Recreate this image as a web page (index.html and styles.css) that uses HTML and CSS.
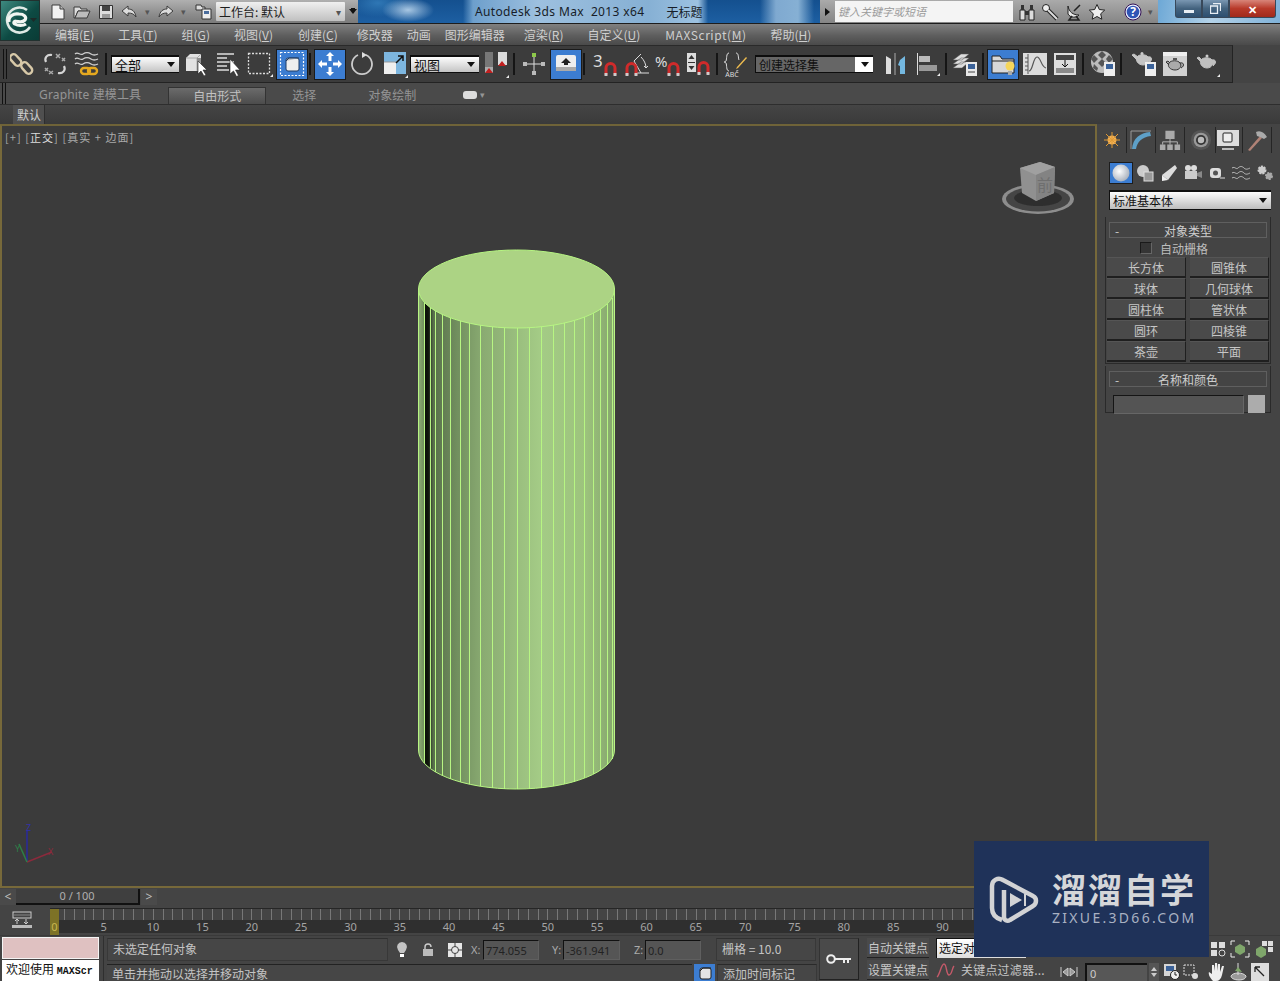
FILE: index.html
```html
<!DOCTYPE html>
<html lang="zh">
<head>
<meta charset="utf-8">
<title>Autodesk 3ds Max 2013 x64</title>
<link rel="stylesheet" href="styles.css">
</head>
<body>
<div class="app">

  <div class="logo">
    <svg width="38" height="39" viewBox="0 0 38 39"><path d="M26 9A12.500 12.500 0 1 0 29 26" fill="none" stroke="#dfe9e5" stroke-width="2.600"/><path d="M8 21c-1-6 5-9 10-8 5 0 8 3 6 6-2 2-6 2-9 1-2 0-3 2-1 3 3 2 8 2 11 0" fill="none" stroke="#f2f6f2" stroke-width="3.200"/><circle cx="16" cy="17" r="1.700" fill="#14504a"/><path d="M29 17h7l-3.500 4z" fill="#1c2a28"/></svg>
  </div>

  <header class="titlebar">
    <div class="qat">
      <span class="qi"><svg width="18" height="16" viewBox="0 0 18 16"><path d="M3 1h8l4 4v10H3z" fill="#f2f2f2" stroke="#3d3d3d"/><path d="M11 1v4h4" fill="#bbb" stroke="#3d3d3d"/></svg></span>
      <span class="qi"><svg width="18" height="16" viewBox="0 0 18 16"><path d="M1 3h6l1 2h6v2H5l-3 7H1z" fill="#ddd" stroke="#3d3d3d"/><path d="M2 14l3-7h12l-3 7z" fill="#bdbdbd" stroke="#3d3d3d"/></svg></span>
      <span class="qi"><svg width="16" height="16" viewBox="0 0 16 16"><path d="M1.500 1.500h13v13h-13z" fill="#ddd" stroke="#333"/><path d="M4 2h8v5H4z" fill="#444"/><path d="M4 10h8v4H4z" fill="#999"/></svg></span>
      <span class="qi qi-s"><svg width="17" height="14" viewBox="0 0 17 14"><path d="M7 1L1 6l6 5V8c4 0 6 1 8 4-1-6-4-8-8-8z" fill="#dcdcdc" stroke="#3d3d3d"/></svg></span>
      <span class="qd">▾</span>
      <span class="qi qi-s"><svg width="17" height="14" viewBox="0 0 17 14"><path d="M10 1l6 5-6 5V8c-4 0-6 1-8 4 1-6 4-8 8-8z" fill="#dcdcdc" stroke="#3d3d3d"/></svg></span>
      <span class="qd qd-r">▾</span>
      <span class="qi"><svg width="17" height="17" viewBox="0 0 17 17"><path d="M1 2h5l1 2h3v3H1z" fill="#ddd" stroke="#333"/><path d="M7 6h9v10H7z" fill="#eee" stroke="#333"/><path d="M9 8h5v3H9z" fill="#4a6d9d"/></svg></span>
      <span class="workspace"><span>工作台: 默认</span><i>▾</i></span>
      <span class="wsarrow"></span>
    </div>
    <div class="aero">
      <span class="apptitle">Autodesk 3ds Max&nbsp; 2013 x64</span>
      <span class="docname">无标题</span>
    </div>
    <div class="searchgroup">
      <span class="sarrow"></span>
      <span class="searchbox">键入关键字或短语</span>
      <span class="si"><svg width="18" height="18" viewBox="0 0 18 18"><path d="M2 7h5v10H2zM11 7h5v10h-5z" fill="#ddd" stroke="#222"/><path d="M3 2h3v5H3zM12 2h3v5h-3zM7 8h4v4H7z" fill="#333"/></svg></span>
      <span class="si"><svg width="18" height="18" viewBox="0 0 18 18"><circle cx="5" cy="5" r="3.500" fill="#eee" stroke="#222"/><path d="M7 7l9 9" stroke="#222" stroke-width="4"/><path d="M7 7l9 9" stroke="#ddd" stroke-width="2"/></svg></span>
      <span class="si"><svg width="18" height="18" viewBox="0 0 18 18"><path d="M3 3c1 6 5 9 11 9-2 3-9 3-11-1z" fill="#e8e8e8" stroke="#222"/><path d="M9 8l6-6M7 13l-3 4h10l-3-4" fill="none" stroke="#222" stroke-width="1.500"/></svg></span>
      <span class="si"><svg width="18" height="18" viewBox="0 0 18 18"><path d="M9 1.500l2.300 5 5.400.6-4 3.700 1.100 5.400L9 13.500l-4.800 2.700 1.100-5.400-4-3.700 5.400-.6z" fill="#eee" stroke="#222"/></svg></span>
      <span class="si si-help"><svg width="18" height="18" viewBox="0 0 18 18"><circle cx="9" cy="9" r="8" fill="#e9eefc" stroke="#315"/><circle cx="9" cy="9" r="6.300" fill="#2f55b5"/><text x="9" y="13" text-anchor="middle" class="helpq">?</text></svg></span>
      <span class="qd qd-help">▾</span>
    </div>
    <div class="winctrl">
      <span class="wb wb-min"><b></b></span>
      <span class="wb wb-max"><svg width="11" height="11" viewBox="0 0 11 11"><path d="M3 .5h7.500V8M.5 3h7v7.500h-7z" fill="none" stroke="#e8eef4" stroke-width="1.300"/></svg></span>
      <span class="wb wb-close">✕</span>
    </div>
  </header>

  <nav class="menubar">
    <span>编辑(<u>E</u>)</span><span>工具(<u>T</u>)</span><span>组(<u>G</u>)</span><span>视图(<u>V</u>)</span><span class="m-t">创建(<u>C</u>)</span><span class="m-n">修改器</span><span class="m-n">动画</span><span>图形编辑器</span><span class="m-p">渲染(<u>R</u>)</span><span>自定义(<u>U</u>)</span><span class="m-x">MAXScript(<u>M</u>)</span><span>帮助(<u>H</u>)</span>
  </nav>

  <div class="toolbar">
    <span class="grip"></span>
    <span class="tb"><svg width="26" height="26" viewBox="0 0 26 26"><g fill="none" stroke="#d8c9a8" stroke-width="2.400"><rect x="2" y="3" width="7" height="13" rx="3.500" transform="rotate(-42 5 9)"/><rect x="13" y="11" width="7" height="13" rx="3.500" transform="rotate(-42 16 17)"/></g></svg></span>
    <span class="tb"><svg width="26" height="26" viewBox="0 0 26 26"><g fill="none" stroke="#d4d4d4" stroke-width="2.200"><path d="M10 4c-5-1-8 3-6 7M16 22c5 1 8-3 6-7"/></g><g stroke="#aaa" stroke-width="1.500"><path d="M14 3l4 4M18 3l-4 4M20 7l3 3M23 7l-3 3M3 17l3 3M6 17l-3 3M7 20l4 3M11 20l-4 3"/></g></svg></span>
    <span class="tb"><svg width="28" height="28" viewBox="0 0 28 28"><g fill="none" stroke="#d0d0d0" stroke-width="1.300"><path d="M2 4c3-3 5 2 8 0s5-2 8 0 5 1 7 0M2 9c3-3 5 2 8 0s5-2 8 0 5 1 7 0M2 14c3-3 5 2 8 0s5-2 8 0 5 1 7 0"/></g><g fill="none" stroke="#e5a81f" stroke-width="2.400"><rect x="8" y="18" width="9" height="6" rx="3"/><rect x="15" y="18" width="9" height="6" rx="3"/></g></svg></span>
    <span class="sep"></span>
    <span class="dd dd-sel"><span>全部</span><i></i></span>
    <span class="tb tb-g1"><svg width="22" height="24" viewBox="0 0 22 24"><path d="M1 6l4-4h11v13l-4 4H1z" fill="#e2e2e2"/><path d="M12 6h-11M12 6l4-4M12 6v13" stroke="#aaa" fill="none"/><path d="M12 6h4v9l-4 4z" fill="#8f8f8f"/><path d="M13 9v13l3-3 3 5 2-1-3-5h4z" fill="#fff" stroke="#222" stroke-width=".6"/></svg></span>
    <span class="tb"><svg width="26" height="26" viewBox="0 0 26 26"><path d="M2 3h17M2 7h10M2 11h17M2 15h10M2 19h12" stroke="#ddd" stroke-width="1.300"/><path d="M15 8v15l3.500-3 3 5.500 2-1-3-5.500h4.500z" fill="#fff" stroke="#222" stroke-width=".6"/></svg></span>
    <span class="tb"><svg width="26" height="26" viewBox="0 0 26 26"><path d="M1.500 2.500h21v20h-21z" fill="none" stroke="#ddd" stroke-dasharray="2 1.500" stroke-width="1.300"/><path d="M23 26l3-3v3z" fill="#eee"/></svg></span>
    <span class="tb on"><svg width="26" height="26" viewBox="0 0 26 26"><path d="M1.500 1.500h23v23h-23z" fill="none" stroke="#fff" stroke-dasharray="2 1.500" stroke-width="1.200"/><rect x="7" y="7" width="13" height="13" rx="2" fill="#eee" stroke="#1f3c66"/><path d="M7 10l3-3h10" fill="#bbb" stroke="#1f3c66"/></svg></span>
    <span class="sep sep-s"></span>
    <span class="tb on tb-g1"><svg width="26" height="26" viewBox="0 0 26 26"><path d="M13 1l4 4h-2.500v5h-3V5H9zM13 25l4-4h-2.500v-5h-3v5H9zM1 13l4-4v2.500h5v3H5V17zM25 13l-4-4v2.500h-5v3h5V17z" fill="#fff"/></svg></span>
    <span class="tb"><svg width="26" height="26" viewBox="0 0 26 26"><path d="M17 4a10 10 0 1 1-8 0" fill="none" stroke="#ccc" stroke-width="1.800"/><path d="M13 1l5 3-5 3z" fill="#ddd"/></svg></span>
    <span class="tb tb-g1"><svg width="26" height="28" viewBox="0 0 26 28"><path d="M2 2h22v22H2z" fill="#7db6df"/><path d="M2 12h12v12H2z" fill="#efefef"/><path d="M2 12h12" stroke="#999"/><path d="M14 13l7-7M16 6h5v5" fill="none" stroke="#111" stroke-width="1.500"/><path d="M23 28l3-3v3z" fill="#eee"/></svg></span>
    <span class="dd dd-view"><span>视图</span><i></i></span>
    <span class="tb tb-g1"><svg width="26" height="28" viewBox="0 0 26 28"><path d="M2 2h8v21H2z" fill="#777"/><path d="M15 2h9v13h-9z" fill="#ddd"/><path d="M2 17h8v6H2z" fill="#aaa"/><path d="M6 18l-4 5h8zM19 11l-4 5h8z" fill="#c01f1f"/><path d="M23 28l3-3v3z" fill="#eee"/></svg></span>
    <span class="sep sep-t"></span>
    <span class="tb tb-g3"><svg width="24" height="24" viewBox="0 0 24 24"><path d="M12 4v16M4 12h16" stroke="#ddd"/><rect x="10" y="1" width="4" height="4" fill="#8dc84a"/><rect x="1" y="10" width="4" height="4" fill="#bbb"/><rect x="19" y="10" width="4" height="4" fill="#bbb"/><rect x="10" y="19" width="4" height="4" fill="#bbb"/></svg></span>
    <span class="tb on"><svg width="24" height="24" viewBox="0 0 24 24"><rect x="2" y="3" width="20" height="16" rx="2" fill="#eee"/><path d="M2 15h20v4H2z" fill="#aaa"/><path d="M12 6l5 5h-3v2h-4v-2H7z" fill="#222"/></svg></span>
    <span class="sep sep-t"></span>
    <span class="tb tb-g3 tb-c"><span class="snapn">3</span><svg class="mag" width="13" height="14" viewBox="0 0 13 14"><path d="M2 13V6a4.500 4.500 0 0 1 9 0v7" fill="none" stroke="#cf2b2b" stroke-width="3"/><path d="M.5 11h3v3h-3zM9.500 11h3v3h-3z" fill="#ccc"/></svg></span>
    <span class="tb tb-g1"><svg width="26" height="26" viewBox="0 0 26 26"><path d="M11 22h14M17 22L10 10 M17 3l-7 7M17 6c3 3 5 7 5 11M22 17l-2-2M22 17l2-2" fill="none" stroke="#ddd"/><path d="M3 24v-7a4.500 4.500 0 0 1 9 0v7" fill="none" stroke="#cf2b2b" stroke-width="3"/><path d="M1.500 22h3v3h-3zM10.500 22h3v3h-3z" fill="#ccc"/></svg></span>
    <span class="tb tb-m2 tb-c"><span class="snapp">%</span><svg class="mag" width="13" height="14" viewBox="0 0 13 14"><path d="M2 13V6a4.500 4.500 0 0 1 9 0v7" fill="none" stroke="#cf2b2b" stroke-width="3"/><path d="M.5 11h3v3h-3zM9.500 11h3v3h-3z" fill="#ccc"/></svg></span>
    <span class="tb tb-c"><svg width="26" height="24" viewBox="0 0 26 24"><path d="M1 1h9v19H1z" fill="#ddd"/><path d="M2 10h7v1H2z" fill="#333"/><path d="M5.500 3l3 4h-6zM5.500 18l3-4h-6z" fill="#333"/><path d="M13 22v-7a4.500 4.500 0 0 1 9 0v7" fill="none" stroke="#cf2b2b" stroke-width="3"/><path d="M11.500 20h3v3h-3zM20.500 20h3v3h-3z" fill="#ccc"/></svg></span>
    <span class="sep sep-t"></span>
    <span class="tb tb-g1"><svg width="26" height="28" viewBox="0 0 26 28"><path d="M7 3c-3 0-2 6-3 8-1 1-2 1-2 1s1 0 2 1c1 2 0 8 3 8M14 3c3 0 2 5 3 7M14 21c1 0 2 0 2-1" fill="none" stroke="#ddd"/><path d="M15 17L24 7l1 1-9 10-2 1z" fill="#eebc4f"/><text x="10" y="27" text-anchor="middle" class="abc">ABC</text></svg></span>
    <span class="dd dd-set"><span>创建选择集</span><i></i></span>
    <span class="tb tb-g7"><svg width="24" height="24" viewBox="0 0 24 24"><path d="M2 4l5 3v15H2z" fill="#ddd"/><path d="M11 1v22" stroke="#aaa"/><path d="M21 4l-5 4-2 5 2 1v8h5z" fill="#74b8e0"/></svg></span>
    <span class="tb"><svg width="24" height="24" viewBox="0 0 24 24"><path d="M1.500 1v22" stroke="#ddd"/><path d="M3 4h11v6H3z" fill="#bbb"/><path d="M3 13h18v6H3z" fill="#999"/><path d="M21 24l3-3v3z" fill="#eee"/></svg></span>
    <span class="sep sep-t"></span>
    <span class="tb tb-g2"><svg width="26" height="26" viewBox="0 0 26 26"><path d="M1 9l8-6h8l-7 6zM1 13l8-6h8l-7 6zM1 17l8-6h8l-7 6z" fill="#ddd" stroke="#555" stroke-width=".5"/><rect x="14" y="11" width="11" height="14" fill="#e9e9e9"/><rect x="16" y="13" width="7" height="5" fill="#3b6299"/><path d="M16 21h7" stroke="#444"/></svg></span>
    <span class="sep sep-t"></span>
    <span class="tb on tb-g3"><svg width="26" height="26" viewBox="0 0 26 26"><path d="M2 5h8l2 3h12v14H2z" fill="#d8d8d8" stroke="#222"/><path d="M2 10h22" stroke="#222"/><circle cx="20" cy="15" r="4.500" fill="#f5d65b"/><path d="M18 20h4v4h-4z" fill="#aaa"/></svg></span>
    <span class="tb"><svg width="24" height="24" viewBox="0 0 24 24"><rect x="0" y="1" width="24" height="22" fill="#dcdcdc"/><path d="M5 2v20M2 6h3M2 10h3M2 14h3M2 18h3" stroke="#555"/><path d="M6 19c4 0 4-14 8-14s4 10 9 11" fill="none" stroke="#555" stroke-width="1.200"/></svg></span>
    <span class="tb tb-m2"><svg width="24" height="24" viewBox="0 0 24 24"><rect x="1" y="1" width="22" height="22" fill="#ddd"/><path d="M3 3h18v5H3z" fill="#444"/><path d="M3 16h18v5H3z" fill="#8a8a8a"/><path d="M12 8v6M9 12l3 3 3-3" stroke="#111" fill="none"/></svg></span>
    <span class="sep sep-t"></span>
    <span class="tb tb-g3"><svg width="26" height="28" viewBox="0 0 26 28"><circle cx="12" cy="12" r="11" fill="#bcbcbc"/><path d="M4 5l4 4-4 4-3-4zM12 1l4 4-4 4-4-4zM12 9l4 4-4 4-4-4zM19 5l4 4-4 4-3-4zM4 14l4 4-1 3-4-3zM17 14l3 3-3 3-3-3z" fill="#555"/><rect x="14" y="12" width="11" height="14" fill="#eee"/><rect x="16" y="14" width="7" height="5" fill="#3b6299"/></svg></span>
    <span class="sep sep-t"></span>
    <span class="tb tb-g6"><svg width="26" height="26" viewBox="0 0 26 26"><path d="M6 6c2-3 9-3 11 0 2 3 0 8-5 8s-8-5-6-8zM6 9L1 4l2-1 4 3M17 6c4-1 5 3 1 6" fill="#c4c4c4" stroke="#c4c4c4"/><circle cx="11" cy="2.500" r="1.500" fill="#ccc"/><rect x="14" y="11" width="11" height="14" fill="#eee"/><rect x="16" y="13" width="7" height="5" fill="#3b6299"/></svg></span>
    <span class="tb tb-m1"><svg width="24" height="24" viewBox="0 0 24 24"><rect width="24" height="24" fill="#d0d0d0"/><rect width="24" height="4" fill="#eee"/><path d="M6 11c2-3 9-3 11 0 2 3 0 7-5 7s-8-4-6-7zM6 13l-3-3 2-1 2 2M17 11c4-1 5 3 1 5" fill="#aaa" stroke="#333"/><path d="M10 6h4v2h-4z" fill="#555"/></svg></span>
    <span class="tb"><svg width="26" height="26" viewBox="0 0 26 26"><path d="M7 9c2-3 9-3 11 0 2 3 0 8-5 8s-8-5-6-8zM7 11L3 7l2-1 3 3M18 9c4-1 5 3 1 6" fill="#c0c0c0" stroke="#c0c0c0"/><circle cx="13" cy="5" r="1.500" fill="#ccc"/><path d="M23 26l3-3v3z" fill="#eee"/></svg></span>
  </div>

  <div class="ribbontabs">
    <span class="grip grip-r"></span>
    <span class="rt rt-1">Graphite 建模工具</span>
    <span class="rt rt-on">自由形式</span>
    <span class="rt rt-2">选择</span>
    <span class="rt rt-3">对象绘制</span>
    <span class="rt-btn"></span><span class="rt-dd">▾</span>
  </div>
  <div class="ribbonpanel"><span class="rp-btn">默认</span></div>

  <div class="workarea">
    <section class="viewport">
      <div class="vplabel">[+] [<b>正交</b>] [真实 + 边面]</div>
      <svg class="cylinder" width="200" height="544" viewBox="416 248 200 544">
        <defs>
          <linearGradient id="side" x1="0" x2="1" y1="0" y2="0">
            <stop offset="0" stop-color="#8eae75"/><stop offset=".028" stop-color="#71905c"/><stop offset=".032" stop-color="#0a0f08"/><stop offset=".05" stop-color="#10160c"/><stop offset=".075" stop-color="#58704b"/><stop offset=".2" stop-color="#72905f"/><stop offset=".33" stop-color="#8aab72"/><stop offset=".62" stop-color="#a4cb86"/><stop offset=".85" stop-color="#9dc37d"/><stop offset="1" stop-color="#84a56d"/>
          </linearGradient>
        </defs>
        <path d="M418.500 289V750A98 39 0 0 0 614.500 750V289z" fill="url(#side)" stroke="#b7f583" stroke-width="1"/>
        <path class="edges" d="M424 301.900V762.900M430 307.300V768.300M435 310.600V771.600M442 314.300V775.300M450 317.600V778.600M460 320.900V781.900M469 323.100V784.100M480 325.200V786.200M492 326.800V787.800M504 327.700V788.700M517 328V789M529 327.700V788.700M541 326.800V787.800M553 325.200V786.200M564 323.100V784.100M574 320.600V781.600M584 317.300V778.300M593 313.400V774.400M600 309.400V770.400M607 304V765M612 297.800V758.800"/>
        <ellipse cx="516.500" cy="289" rx="98" ry="39" fill="#acd384" stroke="#b7f583" stroke-width="1"/>
      </svg>
      <svg class="viewcube" width="76" height="60" viewBox="0 0 76 60">
        <defs><filter id="soft"><feGaussianBlur stdDeviation=".7"/></filter></defs>
        <g filter="url(#soft)">
          <ellipse cx="37" cy="41" rx="36" ry="15" fill="#8d8d8d"/>
          <ellipse cx="37" cy="41" rx="32" ry="12.500" fill="#454545"/>
          <ellipse cx="37" cy="40" rx="24" ry="8" fill="#2f2f2f"/>
          <path d="M19 10L39 4l15 5-1 26-18 8-14-8z" fill="#909090"/>
          <path d="M19 10l16 7 19-8-15-5z" fill="#a0a0a0"/>
          <path d="M35 17v26l18-8 1-26z" fill="#838383"/>
        </g>
        <text x="44" y="33" text-anchor="middle" class="cubefront">前</text>
      </svg>
      <svg class="tripod" width="60" height="44" viewBox="0 0 60 44">
        <path d="M25 40V8" stroke="#2a2a9e" stroke-width="1.500"/>
        <path d="M25 40l25-10" stroke="#8c2a3c" stroke-width="1.500"/>
        <path d="M25 40L17 22" stroke="#2d7f48" stroke-width="1.500"/>
        <text x="24" y="9" class="axis axis-z">Z</text>
        <text x="46" y="33" class="axis axis-x">X</text>
        <text x="13" y="30" class="axis axis-y">Y</text>
      </svg>
    </section>

    <aside class="panel">
      <div class="ptabs">
        <span class="pt"><svg width="16" height="16" viewBox="0 0 16 16"><circle cx="8" cy="8" r="4.500" fill="#f2b155"/><path d="M8 0v16M0 8h16M2 2l12 12M14 2L2 14" stroke="#e09a35"/></svg></span>
        <span class="pt"><svg width="24" height="22" viewBox="0 0 24 22"><path d="M3 20C4 9 11 4 21 3l1 4C13 8 8 13 7 20z" fill="#5ea0c8"/><path d="M2 20V2h20" fill="none" stroke="#999" stroke-width="1"/></svg></span>
        <span class="pt"><svg width="22" height="22" viewBox="0 0 24 24"><path d="M7 2h10v9H7zM1 17h6v6H1zM9 17h6v6H9zM17 17h6v6h-6z" fill="#aaa"/><path d="M12 11v6M4 17v-3h16v3" fill="none" stroke="#bbb"/></svg></span>
        <span class="pt pt-t"><svg width="24" height="22" viewBox="0 0 26 24"><circle cx="13" cy="12" r="11" fill="#555"/><circle cx="13" cy="12" r="8" fill="#999"/><circle cx="13" cy="12" r="5.500" fill="#333"/><circle cx="13" cy="12" r="3.500" fill="#bbb"/></svg></span>
        <span class="pt pt-u"><svg width="24" height="22" viewBox="0 0 24 22"><rect x="1" y="1" width="22" height="16" fill="#ddd"/><rect x="7" y="4" width="9" height="9" rx="1" fill="#eee" stroke="#222"/><path d="M6 20h12" stroke="#bbb" stroke-width="2"/></svg></span>
        <span class="pt"><svg width="22" height="22" viewBox="0 0 22 22"><path d="M2 21L14 7l2 2L4 22z" fill="#b08276"/><path d="M10 3c4-2 8 0 11 5l-3 2-4-2-3-1z" fill="#aaa"/></svg></span>
      </div>
      <div class="psub">
        <span class="ps ps-on"><svg width="18" height="18" viewBox="0 0 18 18"><defs><radialGradient id="ball" cx=".4" cy=".4" r=".7"><stop offset="0" stop-color="#fff"/><stop offset="1" stop-color="#9fa8b5"/></radialGradient></defs><circle cx="9" cy="9" r="8.500" fill="url(#ball)"/></svg></span>
        <span class="ps"><svg width="18" height="18" viewBox="0 0 18 18"><circle cx="7" cy="7" r="6" fill="#ccc"/><rect x="8" y="8" width="9" height="9" fill="#999" stroke="#ddd"/></svg></span>
        <span class="ps"><svg width="18" height="18" viewBox="0 0 18 18"><path d="M15 1l2 3-9 12-6-5z" fill="#ddd"/><path d="M2 11l6 5-6 1z" fill="#eee"/></svg></span>
        <span class="ps"><svg width="20" height="18" viewBox="0 0 20 18"><circle cx="5" cy="4" r="3" fill="#ddd"/><circle cx="11" cy="4" r="3" fill="#ddd"/><rect x="2" y="7" width="12" height="8" fill="#ccc"/><path d="M14 9l5-2v7l-5-2z" fill="#888"/></svg></span>
        <span class="ps"><svg width="18" height="18" viewBox="0 0 18 18"><rect x="2" y="4" width="11" height="10" rx="3" fill="#ddd"/><circle cx="7.500" cy="9" r="2.500" fill="#555"/><path d="M12 14h5" stroke="#ddd"/></svg></span>
        <span class="ps"><svg width="20" height="16" viewBox="0 0 20 16"><path d="M1 3c3-2 4 2 6 0s4-2 6 0 4 1 6 0M1 8c3-2 4 2 6 0s4-2 6 0 4 1 6 0M1 13c3-2 4 2 6 0s4-2 6 0 4 1 6 0" fill="none" stroke="#bbb"/></svg></span>
        <span class="ps"><svg width="18" height="18" viewBox="0 0 18 18"><circle cx="6" cy="6" r="3.500" fill="#ccc" stroke="#ccc" stroke-width="2" stroke-dasharray="2 1"/><circle cx="13" cy="12" r="3" fill="#aaa" stroke="#aaa" stroke-width="2" stroke-dasharray="2 1"/></svg></span>
      </div>
      <div class="pselect"><span>标准基本体</span><i></i></div>

      <div class="rollouts">
        <div class="roll">
          <div class="rollhead"><span class="minus">-</span><span>对象类型</span></div>
          <div class="rollbody">
            <label class="autogrid"><span class="check"></span><span>自动栅格</span></label>
            <div class="objgrid">
              <span class="ob">长方体</span><span class="ob">圆锥体</span>
              <span class="ob">球体</span><span class="ob">几何球体</span>
              <span class="ob">圆柱体</span><span class="ob">管状体</span>
              <span class="ob">圆环</span><span class="ob">四棱锥</span>
              <span class="ob">茶壶</span><span class="ob">平面</span>
            </div>
          </div>
        </div>
        <div class="roll roll-2">
          <div class="rollhead"><span class="minus">-</span><span>名称和颜色</span></div>
          <div class="rollbody namebody"><span class="nameinput"></span><span class="swatch"></span></div>
        </div>
      </div>
    </aside>
  </div>

  <div class="timeslider">
    <span class="tsb">&lt;</span>
    <span class="tstrack">0 / 100</span>
    <span class="tsb tsb-r">&gt;</span>
  </div>

  <div class="trackbar">
    <span class="trackicon"><svg width="20" height="18" viewBox="0 0 20 18"><rect x="1" y="1" width="18" height="6" fill="none" stroke="#ccc"/><path d="M1 4h18" stroke="#888"/><path d="M0 14h20v3H0z" fill="#bbb"/><path d="M5 13V8M3 10l2-2 2 2M14 8v5M12 11l2 2 2-2" stroke="#ccc" fill="none"/></svg></span>
    <div class="ruler">
      <span class="timemark"></span>
      <div class="labels">
        <span class="l0">0</span><span>5</span><span>10</span><span>15</span><span>20</span><span>25</span><span>30</span><span>35</span><span>40</span><span>45</span><span>50</span><span>55</span><span>60</span><span>65</span><span>70</span><span>75</span><span>80</span><span>85</span><span>90</span>
      </div>
    </div>
  </div>

  <footer class="status">
    <div class="listener">
      <span class="macro"></span>
      <span class="welcome">欢迎使用 <em>MAXScr</em></span>
    </div>
    <div class="statusmain">
      <div class="srow">
        <span class="field f-sel">未选定任何对象</span>
        <span class="sico s1"><svg width="12" height="17" viewBox="0 0 12 17"><path d="M6 1a5 5 0 0 1 4 8l-2 3H4L2 9a5 5 0 0 1 4-8z" fill="#c4c4c4"/><path d="M4 13h4v3H4z" fill="#fff"/></svg></span>
        <span class="sico s2"><svg width="12" height="14" viewBox="0 0 12 14"><path d="M3 6V4a3 3 0 0 1 6 0" fill="none" stroke="#ccc" stroke-width="1.400"/><rect x="1" y="6" width="10" height="7" fill="#bbb"/></svg></span>
        <span class="sico s3"><svg width="14" height="14" viewBox="0 0 14 14"><rect width="14" height="14" fill="#e6e6e6"/><circle cx="7" cy="7" r="3.500" fill="none" stroke="#444"/><path d="M7 0v4M7 10v4M0 7h4M10 7h4" stroke="#444"/></svg></span>
        <span class="axl ax-x">X:</span><span class="num n-x">774.055</span>
        <span class="axl ax-y">Y:</span><span class="num n-y">-361.941</span>
        <span class="axl ax-z">Z:</span><span class="num n-z">0.0</span>
        <span class="field f-grid">栅格 = 10.0</span>
      </div>
      <div class="srow srow-2">
        <span class="field f-prompt">单击并拖动以选择并移动对象</span>
        <span class="blueb"><svg width="14" height="14" viewBox="0 0 14 14"><rect x="2" y="2" width="11" height="11" rx="2" fill="#e4e4e4" stroke="#222"/><path d="M2 5l3-3h8" fill="none" stroke="#222"/></svg></span>
        <span class="field f-time">添加时间标记</span>
      </div>
    </div>
    <span class="keybtn"><svg width="26" height="12" viewBox="0 0 26 12"><circle cx="5" cy="6" r="3.800" fill="none" stroke="#eee" stroke-width="2"/><path d="M9 5h16v2h-2v3h-2V7h-2v3h-2V7H9z" fill="#eee"/></svg></span>
    <div class="keycol">
      <span class="kb">自动关键点</span>
      <span class="kb">设置关键点</span>
    </div>
    <div class="filtercol">
      <span class="selset">选定对象</span>
      <div class="frow">
        <span class="curve"><svg width="20" height="18" viewBox="0 0 20 18"><path d="M1 16c3-2 4-13 7-13s2 11 5 11 3-7 5-9" fill="none" stroke="#c65a6a" stroke-width="1.400"/></svg></span>
        <span class="filterbtn">关键点过滤器...</span>
      </div>
    </div>
    <div class="playcol">
      <div class="prow prow-top">
        <span class="nv"><svg width="16" height="16" viewBox="0 0 16 16"><path d="M1 1h6v6H1zM9 1h6v6H9zM1 9h6v6H1z" fill="#ddd"/><circle cx="12" cy="12" r="3" fill="none" stroke="#ddd"/></svg></span>
        <span class="nv"><svg width="20" height="18" viewBox="0 0 20 18"><path d="M1 1h4M15 1h4M1 17h4M15 17h4M1 1v4M19 1v4M1 13v4M19 13v4" stroke="#eee"/><path d="M10 4l5 3v5l-5 3-5-3V7z" fill="#7fa66b"/></svg></span>
        <span class="nv"><svg width="20" height="18" viewBox="0 0 20 18"><path d="M8 1h5v5H8zM14 1h5v5h-5zM14 7h5v5h-5z" fill="#ddd"/><path d="M2 9l5-3 5 3v6l-5 3-5-3z" fill="#7fa66b"/></svg></span>
      </div>
      <div class="prow">
        <span class="pb"><svg width="18" height="10" viewBox="0 0 18 10"><path d="M1 0v10M8 1L3 5l5 4zM10 1l5 4-5 4zM17 0v10" stroke="#ccc" fill="#999"/></svg></span>
        <span class="frameinput">0</span>
        <span class="spin"><i></i><b></b></span>
        <span class="nv nv-a"><svg width="16" height="16" viewBox="0 0 16 16"><rect x="0" y="0" width="12" height="12" fill="#d5d5d5"/><rect x="2" y="2" width="8" height="5" fill="#3b6299"/><circle cx="11" cy="11" r="4.500" fill="#eee" stroke="#222"/><path d="M11 8v3h2" stroke="#222" fill="none"/></svg></span>
        <span class="nv nv-b"><svg width="16" height="16" viewBox="0 0 16 16"><path d="M1 1h10v10H1z" fill="none" stroke="#ddd" stroke-dasharray="2 1"/><circle cx="12" cy="12" r="3" fill="#ddd"/></svg></span>
        <span class="nv nv-c"><svg width="20" height="20" viewBox="0 0 20 20"><path d="M6 19c-3-3-5-7-4-9l3 2V3l2 0 1 6V1h2l1 8V2h2l0 8 2-6h2l-2 9c-1 4-3 6-6 6z" fill="#eee"/></svg></span>
        <span class="nv nv-d"><svg width="20" height="20" viewBox="0 0 20 20"><path d="M9 1v12M2 14c2-4 12-4 15 0 0 2-2 4-7 4s-8-2-8-4z" fill="#999" stroke="#ddd"/><path d="M6 9l3-4 4 5z" fill="#7fa66b"/></svg></span>
        <span class="nv nv-e"><svg width="18" height="18" viewBox="0 0 18 18"><rect width="18" height="18" fill="#ddd"/><path d="M4 4l9 9M4 4h5M4 4v5" stroke="#222" fill="none" stroke-width="1.300"/></svg></span>
      </div>
    </div>
  </footer>

  <aside class="watermark">
    <svg width="52" height="52" viewBox="0 0 52 52"><path d="M14 46C7 44 4 39 4 34V12C4 6 10 3 15 6l30 16c4 2 4 7 0 10L22 46c-3 2-6 0-6-3V16" fill="none" stroke="#d2d3d5" stroke-width="4.500" stroke-linejoin="round"/><path d="M22 19l12 7-12 7z" fill="#d2d3d5"/><path d="M37 20v12" stroke="#d2d3d5" stroke-width="2"/></svg>
    <div class="wmtext">
      <strong>溜溜自学</strong>
      <span>ZIXUE.3D66.COM</span>
    </div>
  </aside>
</div>
</body>
</html>
```
FILE: styles.css
```css
* { box-sizing: border-box; }
html, body { margin: 0; padding: 0; background: #444; }
body { font-family: "Noto Sans CJK SC", "Noto Sans", sans-serif; font-size: 12px; color: #c9c9c9; }
svg { display: block; flex: none; }
i, em { font-style: normal; }

.app { position: relative; width: 1280px; height: 981px; overflow: hidden; display: flex; flex-direction: column; background: #444; }

/* logo */
.logo { position: absolute; left: 0; top: 0; width: 40px; height: 41px; background: linear-gradient(135deg, #3e8a80, #0d4a43 55%, #0a3c36); border: 1px solid #22312f; z-index: 3; }

/* title bar */
.titlebar { height: 24px; display: flex; background: #1c5fa6; border-bottom: 1px solid #1d1d1d; flex: none; }
.qat { width: 358px; flex: none; padding: 0 0 0 46px; display: flex; align-items: center; background: linear-gradient(#b0b0b0, #8d8d8d 60%, #7b7b7b); }
.qi { width: 24px; display: flex; justify-content: center; }
.qi-s { width: 22px; }
.qd { width: 14px; text-align: center; color: #555; font-size: 9px; line-height: 1; }
.qd-r { margin-right: 1px; }
.workspace { width: 129px; height: 19px; margin-left: 1px; padding: 0 4px 0 3px; display: flex; justify-content: space-between; align-items: center; background: linear-gradient(#f0f0f0, #c0c0c0); color: #1d1d1d; border-radius: 1px; }
.workspace i { color: #555; font-size: 10px; }
.wsarrow { width: 0; height: 0; margin: 0 0 0 3px; border: 4px solid transparent; border-top: 5px solid #111; border-bottom: 0; position: relative; left: 1px; box-shadow: 0 -3px 0 -2px #111; }
.aero { width: 462px; flex: none; display: flex; align-items: center; padding: 0 0 1px 117px; gap: 22px; color: #171d28; font-family: "Noto Sans", sans-serif; font-size: 12px;
  background:
    radial-gradient(ellipse 26px 12px at 50px 10px, #a8c7e3, transparent),
    radial-gradient(ellipse 30px 14px at 20px 3px, #2f77b5, transparent),
    linear-gradient(90deg, transparent 105px, #6d9fcc 115px, #9dc0df 180px, #86b0d4 290px, #9dc2e1 340px, transparent 350px, transparent 402px, #7fa9d0 418px, #86b0d4 440px, transparent 456px),
    linear-gradient(#14508f, #1d5fa2); }
.apptitle { letter-spacing: .36px; white-space: nowrap; }
.docname { font-family: "Noto Sans CJK SC", sans-serif; white-space: nowrap; }
.searchgroup { width: 338px; display: flex; align-items: center; background: linear-gradient(#aaa, #858585); flex: none; }
.sarrow { width: 0; height: 0; margin: 0 5px 0 5px; border: 4px solid transparent; border-left: 5px solid #111; border-right: 0; }
.searchbox { width: 178px; height: 21px; margin-right: 2px; background: #f4f4f4; color: #9b9b9b; font-size: 11px; font-style: italic; padding: 2px 3px; line-height: 17px; white-space: nowrap; }
.si { width: 23.500px; display: flex; justify-content: center; }
.si-help { margin-left: 12px; }
.qd-help { width: 10px; margin-left: 1px; color: #555; }
.winctrl { flex: 1; padding-left: 17px; display: flex; align-items: flex-start; background: linear-gradient(100deg, #6da8d6, #b4d2e8 45%, #7fb1d8); }
.wb { height: 18px; width: 27px; display: flex; align-items: center; justify-content: center; background: linear-gradient(#7a97b2, #44637f 50%, #2d4f70); border: 1px solid #38485a; border-top: 0; color: #fff; }
.wb-min { border-radius: 0 0 0 3px; }
.wb-min b { width: 10px; height: 3px; margin-top: 5px; background: #e8eef4; }
.wb-close { width: 47px; background: linear-gradient(#d88579, #b83a2a 50%, #a02a1c); border-radius: 0 0 3px 0; font-size: 11px; font-weight: bold; }

/* menu */
.menubar { height: 21px; flex: none; display: flex; gap: 24px; padding: 0 0 0 55px; align-items: center; color: #cfcfcf; background: linear-gradient(#808080, #5e5e5e 55%, #4a4a4a); white-space: nowrap; }
.menubar span { flex: none; }
.menubar u { text-decoration: underline; }
.menubar .m-t { margin-left: 1px; margin-right: -5px; }
.menubar .m-n { margin-right: -10px; }
.menubar .m-p { margin-left: -5px; }
.menubar .m-x { letter-spacing: .55px; margin-left: 1px; }

/* main toolbar */
.toolbar { height: 38px; width: 1233px; flex: none; display: flex; align-items: center; padding-left: 3px; background: #3c3c3c; border-top: 1px solid #2a2a2a; border-bottom: 1px solid #232323; border-right: 1px solid #232323; }
.grip { width: 4px; height: 30px; flex: none; border-left: 1px solid #111; border-right: 1px solid #111; }
.tb { width: 32px; height: 31px; flex: none; display: flex; align-items: center; justify-content: center; position: relative; }
.tb.on { background: #3c7dd1; box-shadow: 0 0 0 1px #1b1b1b inset; }
.tb-g1 { margin-left: 1px; }
.tb-g2 { margin-left: 2px; }
.tb-g3 { margin-left: 3px; }
.tb-g6 { margin-left: 6px; }
.tb-g7 { margin-left: 7px; }
.tb-m1 { margin-left: -1px; }
.tb-m2 { margin-left: -2px; }
.tb-c { align-items: flex-end; padding-bottom: 4px; }
.snapn { position: absolute; left: 5px; top: 1px; font-family: "Noto Sans", sans-serif; font-size: 17px; color: #ddd; line-height: 22px; }
.snapp { position: absolute; left: 4px; top: 2px; font-family: "Noto Sans", sans-serif; font-size: 15px; color: #ddd; line-height: 20px; }
.mag { margin-left: 12px; }
.sep { width: 2px; height: 22px; margin: 0 1px 0 2px; background: #151515; flex: none; }
.sep-s { margin: 0 2px 0 1px; }
.sep-t { margin: 0 0 0 1px; }
.dd { height: 18px; flex: none; display: flex; justify-content: space-between; align-items: center; padding: 0 4px 0 3px; color: #101010; font-size: 13px; background: linear-gradient(#fdfdfd, #c4c4c4); border: 1px solid #0d0d0d; border-width: 2px 0 1px 1px; }
.dd i { width: 0; height: 0; border: 4px solid transparent; border-top: 5px solid #111; border-bottom: 0; }
.dd-sel { width: 68px; margin-left: 3px; }
.dd-view { width: 69px; margin-left: -1px; }
.dd-set { width: 118px; margin-left: 4px; font-size: 12px; background: linear-gradient(90deg, #666 0, #666 85%, #fff 85%); }

/* ribbon */
.ribbontabs { height: 22px; flex: none; display: flex; align-items: flex-end; padding-left: 2px; background: #4a4a4a; border-bottom: 1px solid #2e2e2e; color: #959595; position: relative; }
.grip-r { height: 21px; margin: 0 5px 0 0; }
.rt { height: 17px; line-height: 16px; white-space: nowrap; font-size: 12px; }
.rt-1 { margin-left: 28px; font-family: "Noto Sans", "Noto Sans CJK SC", sans-serif; letter-spacing: .15px; }
.rt-on { width: 98px; margin-left: 27px; text-align: center; background: linear-gradient(#6b6b6b, #4c4c4c); color: #c2c2c2; border: 1px solid #333; border-bottom: 0; }
.rt-2 { margin-left: 26px; }
.rt-3 { margin-left: 52px; }
.rt-btn { width: 14px; height: 8px; margin: 0 0 5px 47px; border-radius: 3px; background: #dcdcdc; }
.rt-dd { margin: 0 0 2px 3px; font-size: 9px; line-height: 14px; }
.ribbonpanel { height: 19px; flex: none; background: linear-gradient(#454545, #3a3a3a); padding-left: 13px; }
.rp-btn { display: block; width: 32px; height: 19px; padding-left: 4px; background: #4f4f4f; border-right: 1px solid #2e2e2e; color: #d0d0d0; line-height: 19px; }

/* work area */
.workarea { height: 764px; flex: none; display: flex; background: #444; }
.viewport { width: 1097px; position: relative; background: #3b3b3b; border: 2px solid #77693a; border-top-color: #6f6338; }
.vplabel { padding: 4px 0 0 3px; font-size: 11px; line-height: 15px; color: #aaa; letter-spacing: 1.050px; }
.vplabel b { font-weight: 400; color: #ddd; }
.cylinder { position: absolute; left: 414px; top: 122px; }
.edges { stroke: #b7f583; stroke-width: 1; fill: none; shape-rendering: crispEdges; }
.viewcube { position: absolute; left: 999px; top: 32px; }
.cubefront { font-size: 16px; fill: #6f6f6f; }
.tripod { position: absolute; left: 0; top: 696px; }
.axis { font-family: "Noto Sans", sans-serif; font-size: 9px; }
.axis-z { fill: #3232a8; }
.axis-x { fill: #8c2a3c; }
.axis-y { fill: #2d7f48; }

/* command panel */
.panel { width: 183px; padding-left: 1px; flex: none; }
.ptabs { display: flex; padding-top: 3px; height: 31px; }
.pt { width: 29px; height: 26px; display: flex; align-items: center; justify-content: center; border-right: 1px solid #252525; flex: none; }
.pt-t { margin-left: 2px; }
.pt-u { margin-left: -2px; }
.psub { display: flex; height: 32px; padding: 3px 0 0 11px; align-items: center; }
.ps { width: 24px; height: 22px; display: flex; align-items: center; justify-content: center; flex: none; }
.ps-on { background: #3c7dd1; border: 1px solid #1d1d1d; }
.pselect { width: 162px; height: 20px; margin: 3px 0 0 11px; padding: 0 4px 0 3px; display: flex; justify-content: space-between; align-items: center; color: #111; background: linear-gradient(#fcfcfc, #bdbdbd); border: 1px solid #101010; border-width: 2px 0 1px 1px; }
.pselect i { width: 0; height: 0; border: 4px solid transparent; border-top: 5px solid #111; border-bottom: 0; }
.rollouts { margin: 7px 0 0 7px; width: 166px; }
.roll { border: 1px solid #2a2a2a; border-top: 0; padding-bottom: 1px; }
.rollhead { height: 16px; margin: 0 3px 0 3px; display: flex; justify-content: center; line-height: 15px; position: relative; border: 1px solid #5f5f5f; top: 5px; background: #444; color: #cfcfcf; }
.minus { position: absolute; left: 5px; top: 0; }
.autogrid { height: 23px; padding: 7px 0 0 34px; display: flex; align-items: center; gap: 8px; color: #bdbdbd; }
.check { width: 12px; height: 12px; background: #353535; border: 1px solid #1a1a1a; border-right-color: #666; border-bottom-color: #666; }
.objgrid { display: grid; grid-template-columns: 79px 79px; column-gap: 4px; row-gap: 0; padding: 1px 2px 0 1px; }
.ob { height: 21px; line-height: 19px; text-align: center; color: #c6c6c6; background: #4a4a4a; border-bottom: 2px solid #1f1f1f; border-right: 1px solid #1f1f1f; border-top: 1px solid #555; }
.roll-2 { margin-top: 2px; height: 47px; border-top: 0; }
.namebody { display: flex; padding: 13px 0 0 7px; gap: 4px; }
.nameinput { width: 131px; height: 19px; background: #545454; border: 1px solid #151515; border-right-color: #666; border-bottom-color: #666; }
.swatch { width: 17px; height: 18px; background: #acacac; }

/* time slider */
.timeslider { height: 18px; flex: none; display: flex; background: #444; padding-top: 1px; }
.tsb { width: 16px; height: 16px; text-align: center; line-height: 15px; color: #c0c0c0; background: #4a4a4a; font-family: "Noto Sans", sans-serif; }
.tsb-r { margin-left: 1px; }
.tstrack { width: 124px; height: 16px; background: #3f3f3f; border-right: 2px solid #111; border-bottom: 2px solid #111; text-align: center; line-height: 14px; color: #b0b0b0; font-family: "Noto Sans", sans-serif; font-size: 11px; }

/* track bar */
.trackbar { height: 29px; flex: none; display: flex; padding-top: 2px; background: #444; }
.trackicon { width: 50px; padding: 3px 0 0 12px; background: #444; flex: none; }
.ruler { width: 1130px; height: 25px; position: relative; border-top: 1px solid #262626; background:
  repeating-linear-gradient(90deg, #777 0, #777 1px, transparent 1px, transparent 9.870px) 4px 0 / 100% 11px no-repeat,
  linear-gradient(#444 11px, #2f2f2f 11px); }
.timemark { position: absolute; left: 0; top: 0; width: 9px; height: 26px; background: #7d7226; }
.labels { display: flex; position: relative; padding: 11px 0 0 0; margin-left: -20.300px; font-family: "Noto Sans", sans-serif; font-size: 11px; color: #a5a5a5; line-height: 13px; }
.labels span { width: 49.350px; text-align: center; flex: none; }
.labels .l0 { color: #c9b850; }

/* status */
.status { height: 46px; flex: none; display: flex; background: #444; border-top: 1px solid #3a3a3a; overflow: hidden; }
.listener { width: 104px; padding: 1px 0 0 2px; flex: none; border-right: 1px solid #2f2f2f; }
.macro { display: block; width: 97px; height: 22px; background: #dfc1c1; border: 1px solid #f4f4f4; }
.welcome { display: block; width: 97px; height: 22px; margin-top: 1px; background: #fff; color: #111; line-height: 18px; padding-left: 4px; font-size: 12px; white-space: nowrap; overflow: hidden; }
.welcome em { font-family: "Liberation Mono", monospace; font-size: 10px; font-weight: bold; }
.statusmain { width: 711px; padding: 2px 0 0 3px; flex: none; }
.srow { display: flex; align-items: center; height: 23px; }
.srow-2 { margin-top: 3px; align-items: flex-start; height: 18px; }
.field { height: 100%; line-height: 20px; padding-left: 5px; flex: none; color: #c4c4c4; border: 1px solid #383838; border-top-color: #303030; background: #464646; white-space: nowrap; }
.f-sel { width: 281px; }
.f-prompt { width: 585px; border: 0; border-top: 1px solid #222; line-height: 18px; }
.f-time { width: 100px; margin-left: 2px; border-top: 1px solid #2a2a2a; line-height: 18px; }
.f-grid { width: 100px; margin-left: 15px; }
.sico { width: 14px; display: flex; justify-content: center; flex: none; }
.s1 { margin-left: 7px; }
.s2 { margin-left: 12px; }
.s3 { margin-left: 13px; }
.axl { width: 12px; color: #aaa; font-family: "Noto Sans", sans-serif; font-size: 11px; flex: none; }
.ax-x { margin-left: 9px; }
.ax-y { margin-left: 13px; width: 11px; }
.ax-z { margin-left: 14px; width: 11px; }
.num { height: 20px; width: 56px; line-height: 19px; padding-left: 2px; background: #555; color: #222; border: 1px solid #5f5f5f; border-top: 1px solid #111; border-left: 1px solid #111; font-family: "Noto Sans", sans-serif; font-size: 11px; flex: none; }
.n-y { width: 57px; }
.blueb { width: 21px; height: 18px; margin-left: 2px; display: flex; align-items: center; justify-content: center; background: #3c7dd1; flex: none; }
.keybtn { width: 40px; height: 42px; margin: 2px 0 0 4px; display: flex; align-items: center; justify-content: center; background: #4a4a4a; border: 1px solid #333; border-right-color: #222; border-bottom-color: #222; flex: none; }
.keycol { width: 62px; margin: 2px 0 0 8px; flex: none; }
.kb { display: block; height: 20px; margin-bottom: 2px; line-height: 19px; text-align: center; color: #c8c8c8; background: #4a4a4a; border-bottom: 1px solid #222; white-space: nowrap; }
.filtercol { width: 112px; margin: 2px 0 0 7px; flex: none; }
.selset { display: block; height: 20px; width: 90px; background: linear-gradient(#fff, #ddd); color: #111; padding-left: 2px; line-height: 18px; border: 1px solid #111; border-width: 1px 0 0 1px; white-space: nowrap; overflow: hidden; }
.frow { display: flex; margin-top: 2px; align-items: center; }
.curve { width: 25px; flex: none; }
.filterbtn { white-space: nowrap; color: #c4c4c4; line-height: 20px; letter-spacing: .2px; }
.playcol { flex: 1; }
.prow { display: flex; align-items: center; height: 21px; margin-top: 2px; }
.prow-top { justify-content: flex-end; padding-right: 6px; gap: 4px; height: 21px; }
.pb { width: 24px; margin-left: 9px; flex: none; display: flex; justify-content: center; }
.frameinput { width: 62px; height: 18px; margin-left: 4px; padding-left: 3px; line-height: 17px; background: #575757; color: #ccc; border-top: 2px solid #111; border-left: 2px solid #111; font-family: "Noto Sans", sans-serif; font-size: 11px; flex: none; }
.spin { width: 10px; height: 18px; margin-left: 2px; display: flex; flex-direction: column; align-items: center; justify-content: center; gap: 2px; background: #555; flex: none; }
.spin i { width: 0; height: 0; border: 3px solid transparent; border-bottom: 4px solid #ccc; border-top: 0; }
.spin b { width: 0; height: 0; border: 3px solid transparent; border-top: 4px solid #ccc; border-bottom: 0; }
.nv { display: flex; flex: none; }
.nv-a { margin-left: 5px; }
.nv-b { margin-left: 3px; }
.nv-c { margin-left: 8px; }
.nv-d { margin-left: 2px; }
.nv-e { margin-left: 2px; }

/* watermark */
.watermark { position: absolute; left: 974px; top: 841px; width: 235px; height: 116px; display: flex; align-items: flex-start; padding: 33px 0 0 14px; gap: 12px; background: #1f3259; z-index: 4; }
.wmtext { display: flex; flex-direction: column; margin-top: -2px; color: #d5d6d9; }
.wmtext strong { font-size: 34px; line-height: 34px; letter-spacing: 2px; font-weight: 700; }
.wmtext span { margin-top: 4px; font-family: "Noto Sans", sans-serif; font-size: 14px; letter-spacing: 2.300px; line-height: 16px; color: #a9b1c2; }

.helpq { font-family: "Noto Sans", sans-serif; font-size: 12px; font-weight: 700; fill: #fff; }
.abc { font-family: "Noto Sans", sans-serif; font-size: 7px; fill: #ddd; }
```
